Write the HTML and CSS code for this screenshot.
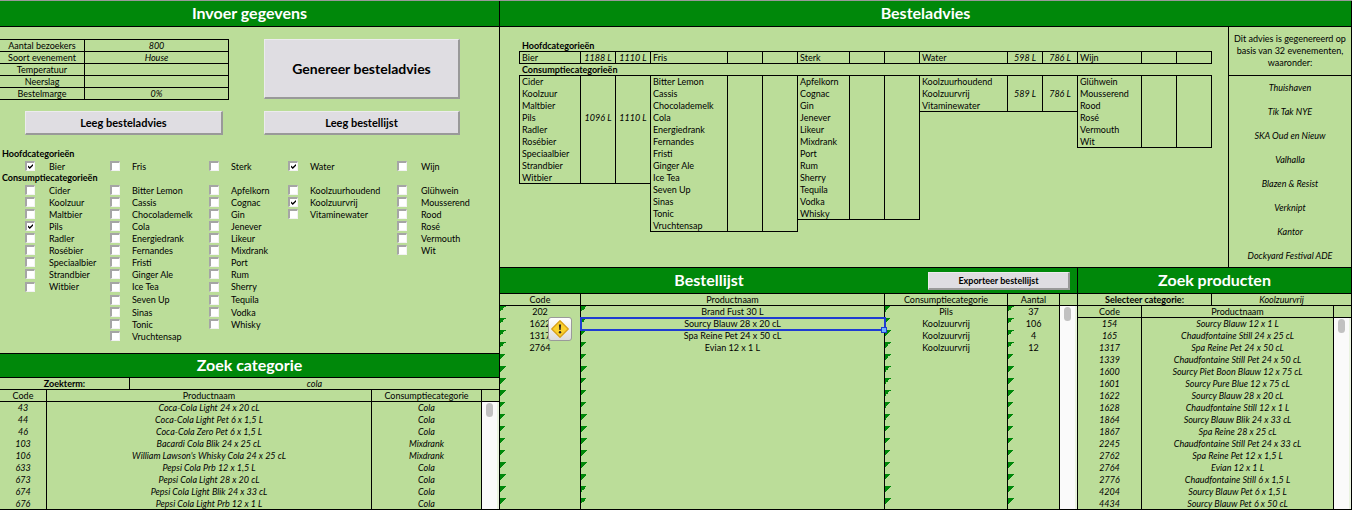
FILE: index.html
```
<!DOCTYPE html>
<html lang="nl">
<head>
<meta charset="utf-8">
<title>Besteladvies</title>
<link rel="stylesheet" href="styles.css">
</head>
<body>
<main class="sheet">
<div class="pane pane-left">
<section class="panel">
<h1 class="bar">Invoer gegevens</h1>
<form class="entry">
<div class="controls">
<table class="grid fields">
<tr><th><label for="f1">Aantal bezoekers</label></th><td><input id="f1" class="cell-input" value="800"></td></tr>
<tr><th><label for="f2">Soort evenement</label></th><td><input id="f2" class="cell-input" value="House"></td></tr>
<tr><th><label for="f3">Temperatuur</label></th><td><input id="f3" class="cell-input"></td></tr>
<tr><th><label for="f4">Neerslag</label></th><td><input id="f4" class="cell-input"></td></tr>
<tr><th><label for="f5">Bestelmarge</label></th><td><input id="f5" class="cell-input" value="0%"></td></tr>
</table>
<button type="button" class="btn btn-large">Genereer besteladvies</button>
<button type="button" class="btn btn-clear">Leeg besteladvies</button>
<button type="button" class="btn">Leeg bestellijst</button>
</div>
<h2 class="subhead">Hoofdcategorieën</h2>
<div class="checks">
<label class="check wide"><input type="checkbox" checked>Bier</label>
<label class="check"><input type="checkbox">Fris</label>
<label class="check"><input type="checkbox">Sterk</label>
<label class="check"><input type="checkbox" checked>Water</label>
<label class="check wide"><input type="checkbox">Wijn</label>
</div>
<h2 class="subhead">Consumptiecategorieën</h2>
<div class="checks">
<div class="check-col">
<label class="check wide"><input type="checkbox">Cider</label>
<label class="check wide"><input type="checkbox">Koolzuur</label>
<label class="check wide"><input type="checkbox">Maltbier</label>
<label class="check wide"><input type="checkbox" checked>Pils</label>
<label class="check wide"><input type="checkbox">Radler</label>
<label class="check wide"><input type="checkbox">Rosébier</label>
<label class="check wide"><input type="checkbox">Speciaalbier</label>
<label class="check wide"><input type="checkbox">Strandbier</label>
<label class="check wide"><input type="checkbox">Witbier</label>
</div>
<div class="check-col">
<label class="check"><input type="checkbox">Bitter Lemon</label>
<label class="check"><input type="checkbox">Cassis</label>
<label class="check"><input type="checkbox">Chocolademelk</label>
<label class="check"><input type="checkbox">Cola</label>
<label class="check"><input type="checkbox">Energiedrank</label>
<label class="check"><input type="checkbox">Fernandes</label>
<label class="check"><input type="checkbox">Fristi</label>
<label class="check"><input type="checkbox">Ginger Ale</label>
<label class="check"><input type="checkbox">Ice Tea</label>
<label class="check"><input type="checkbox">Seven Up</label>
<label class="check"><input type="checkbox">Sinas</label>
<label class="check"><input type="checkbox">Tonic</label>
<label class="check"><input type="checkbox">Vruchtensap</label>
</div>
<div class="check-col">
<label class="check"><input type="checkbox">Apfelkorn</label>
<label class="check"><input type="checkbox">Cognac</label>
<label class="check"><input type="checkbox">Gin</label>
<label class="check"><input type="checkbox">Jenever</label>
<label class="check"><input type="checkbox">Likeur</label>
<label class="check"><input type="checkbox">Mixdrank</label>
<label class="check"><input type="checkbox">Port</label>
<label class="check"><input type="checkbox">Rum</label>
<label class="check"><input type="checkbox">Sherry</label>
<label class="check"><input type="checkbox">Tequila</label>
<label class="check"><input type="checkbox">Vodka</label>
<label class="check"><input type="checkbox">Whisky</label>
</div>
<div class="check-col">
<label class="check"><input type="checkbox">Koolzuurhoudend</label>
<label class="check"><input type="checkbox" checked>Koolzuurvrij</label>
<label class="check"><input type="checkbox">Vitaminewater</label>
</div>
<div class="check-col">
<label class="check wide"><input type="checkbox">Glühwein</label>
<label class="check wide"><input type="checkbox">Mousserend</label>
<label class="check wide"><input type="checkbox">Rood</label>
<label class="check wide"><input type="checkbox">Rosé</label>
<label class="check wide"><input type="checkbox">Vermouth</label>
<label class="check wide"><input type="checkbox">Wit</label>
</div>
</div>
</form>
</section>
<section class="panel">
<h1 class="bar bar-low">Zoek categorie</h1>
<div class="query query-cat"><label for="term">Zoekterm:</label><input id="term" class="cell-input" value="cola"></div>
<table class="grid list italic">
<colgroup><col style="width:9.42%"><col style="width:65.13%"><col style="width:22.05%"><col></colgroup>
<thead><tr><th>Code</th><th>Productnaam</th><th>Consumptiecategorie</th><th></th></tr></thead>
<tbody>
<tr><td>43</td><td>Coca-Cola Light 24 x 20 cL</td><td>Cola</td><td class="scroll" rowspan="9"><div class="thumb"></div></td></tr>
<tr><td>44</td><td>Coca-Cola Light Pet 6 x 1,5 L</td><td>Cola</td></tr>
<tr><td>46</td><td>Coca-Cola Zero Pet 6 x 1,5 L</td><td>Cola</td></tr>
<tr><td>103</td><td>Bacardi Cola Blik 24 x 25 cL</td><td>Mixdrank</td></tr>
<tr><td>106</td><td>William Lawson's Whisky Cola 24 x 25 cL</td><td>Mixdrank</td></tr>
<tr><td>633</td><td>Pepsi Cola Prb 12 x 1,5 L</td><td>Cola</td></tr>
<tr><td>673</td><td>Pepsi Cola Light 28 x 20 cL</td><td>Cola</td></tr>
<tr><td>674</td><td>Pepsi Cola Light Blik 24 x 33 cL</td><td>Cola</td></tr>
<tr><td>676</td><td>Pepsi Cola Light Prb 12 x 1 L</td><td>Cola</td></tr>
</tbody>
</table>
</section>
</div>
<div class="pane pane-right">
<section class="panel">
<h1 class="bar">Besteladvies</h1>
<div class="advice">
<div class="advice-main">
<h2 class="subhead">Hoofdcategorieën</h2>
<div class="groups">
<table class="group g-bier"><tr><th>Bier</th><td>1188 L</td><td>1110 L</td></tr></table>
<table class="group g-fris"><tr><th>Fris</th><td></td><td></td></tr></table>
<table class="group g-sterk"><tr><th>Sterk</th><td></td><td></td></tr></table>
<table class="group g-water"><tr><th>Water</th><td>598 L</td><td>786 L</td></tr></table>
<table class="group g-wijn"><tr><th>Wijn</th><td></td><td></td></tr></table>
</div>
<h2 class="subhead">Consumptiecategorieën</h2>
<div class="groups">
<table class="group g-bier">
<tr><th>Cider</th><td></td><td></td></tr>
<tr><th>Koolzuur</th><td></td><td></td></tr>
<tr><th>Maltbier</th><td></td><td></td></tr>
<tr><th>Pils</th><td>1096 L</td><td>1110 L</td></tr>
<tr><th>Radler</th><td></td><td></td></tr>
<tr><th>Rosébier</th><td></td><td></td></tr>
<tr><th>Speciaalbier</th><td></td><td></td></tr>
<tr><th>Strandbier</th><td></td><td></td></tr>
<tr><th>Witbier</th><td></td><td></td></tr>
</table>
<table class="group g-fris">
<tr><th>Bitter Lemon</th><td></td><td></td></tr>
<tr><th>Cassis</th><td></td><td></td></tr>
<tr><th>Chocolademelk</th><td></td><td></td></tr>
<tr><th>Cola</th><td></td><td></td></tr>
<tr><th>Energiedrank</th><td></td><td></td></tr>
<tr><th>Fernandes</th><td></td><td></td></tr>
<tr><th>Fristi</th><td></td><td></td></tr>
<tr><th>Ginger Ale</th><td></td><td></td></tr>
<tr><th>Ice Tea</th><td></td><td></td></tr>
<tr><th>Seven Up</th><td></td><td></td></tr>
<tr><th>Sinas</th><td></td><td></td></tr>
<tr><th>Tonic</th><td></td><td></td></tr>
<tr><th>Vruchtensap</th><td></td><td></td></tr>
</table>
<table class="group g-sterk">
<tr><th>Apfelkorn</th><td></td><td></td></tr>
<tr><th>Cognac</th><td></td><td></td></tr>
<tr><th>Gin</th><td></td><td></td></tr>
<tr><th>Jenever</th><td></td><td></td></tr>
<tr><th>Likeur</th><td></td><td></td></tr>
<tr><th>Mixdrank</th><td></td><td></td></tr>
<tr><th>Port</th><td></td><td></td></tr>
<tr><th>Rum</th><td></td><td></td></tr>
<tr><th>Sherry</th><td></td><td></td></tr>
<tr><th>Tequila</th><td></td><td></td></tr>
<tr><th>Vodka</th><td></td><td></td></tr>
<tr><th>Whisky</th><td></td><td></td></tr>
</table>
<table class="group g-water">
<tr><th>Koolzuurhoudend</th><td></td><td></td></tr>
<tr><th>Koolzuurvrij</th><td>589 L</td><td>786 L</td></tr>
<tr><th>Vitaminewater</th><td></td><td></td></tr>
</table>
<table class="group g-wijn">
<tr><th>Glühwein</th><td></td><td></td></tr>
<tr><th>Mousserend</th><td></td><td></td></tr>
<tr><th>Rood</th><td></td><td></td></tr>
<tr><th>Rosé</th><td></td><td></td></tr>
<tr><th>Vermouth</th><td></td><td></td></tr>
<tr><th>Wit</th><td></td><td></td></tr>
</table>
</div>
</div>
<aside class="events">
<p class="events-intro">Dit advies is gegenereerd op basis van 32 evenementen, waaronder:</p>
<ul class="events-list">
<li>Thuishaven</li><li>Tik Tak NYE</li><li>SKA Oud en Nieuw</li><li>Valhalla</li><li>Blazen &amp; Resist</li><li>Verknipt</li><li>Kantor</li><li>Dockyard Festival ADE</li>
</ul>
</aside>
</div>
</section>
<div class="lower">
<section class="panel panel-order">
<div class="bar bar-split"><h1 class="bar-title">Bestellijst</h1><button type="button" class="btn btn-small">Exporteer bestellijst</button></div>
<table class="grid list flagged">
<colgroup><col style="width:14.04%"><col style="width:52.69%"><col style="width:21.32%"><col style="width:9.02%"><col></colgroup>
<thead><tr><th>Code</th><th>Productnaam</th><th>Consumptiecategorie</th><th>Aantal</th><th></th></tr></thead>
<tbody>
<tr><td>202</td><td>Brand Fust 30 L</td><td>Pils</td><td>37</td><td class="scroll" rowspan="17"><div class="thumb"></div></td></tr>
<tr><td>1622</td><td class="selected">Sourcy Blauw 28 x 20 cL<button type="button" class="warn" aria-label="Foutcontrole"><svg viewBox="0 0 24 24" aria-hidden="true"><path d="M12 3 21 12 12 21 3 12Z" fill="#fbd12c" stroke="#d8a017" stroke-width="1.4" stroke-linejoin="round"/><path d="M10.8 7.2h2.4l-.5 6h-1.4Z" fill="#2b2622"/><circle cx="12" cy="15.6" r="1.3" fill="#2b2622"/></svg></button><span class="handle"></span></td><td>Koolzuurvrij</td><td>106</td></tr>
<tr><td>1317</td><td>Spa Reine Pet 24 x 50 cL</td><td>Koolzuurvrij</td><td>4</td></tr>
<tr><td>2764</td><td>Evian 12 x 1 L</td><td>Koolzuurvrij</td><td>12</td></tr>
<tr><td></td><td></td><td></td><td></td></tr>
<tr><td></td><td></td><td></td><td></td></tr>
<tr><td></td><td></td><td></td><td></td></tr>
<tr><td></td><td></td><td></td><td></td></tr>
<tr><td></td><td></td><td></td><td></td></tr>
<tr><td></td><td></td><td></td><td></td></tr>
<tr><td></td><td></td><td></td><td></td></tr>
<tr><td></td><td></td><td></td><td></td></tr>
<tr><td></td><td></td><td></td><td></td></tr>
<tr><td></td><td></td><td></td><td></td></tr>
<tr><td></td><td></td><td></td><td></td></tr>
<tr><td></td><td></td><td></td><td></td></tr>
<tr><td></td><td></td><td></td><td></td></tr>
</tbody>
</table>
</section>
<section class="panel">
<h1 class="bar">Zoek producten</h1>
<div class="query query-prod"><label for="cat">Selecteer categorie:</label><select id="cat" class="cell-input"><option>Koolzuurvrij</option></select></div>
<table class="grid list italic">
<colgroup><col style="width:23.45%"><col style="width:70.33%"><col></colgroup>
<thead><tr><th>Code</th><th>Productnaam</th><th></th></tr></thead>
<tbody>
<tr><td>154</td><td>Sourcy Blauw 12 x 1 L</td><td class="scroll" rowspan="16"><div class="thumb"></div></td></tr>
<tr><td>165</td><td>Chaudfontaine Still 24 x 25 cL</td></tr>
<tr><td>1317</td><td>Spa Reine Pet 24 x 50 cL</td></tr>
<tr><td>1339</td><td>Chaudfontaine Still Pet 24 x 50 cL</td></tr>
<tr><td>1600</td><td>Sourcy Piet Boon Blauw 12 x 75 cL</td></tr>
<tr><td>1601</td><td>Sourcy Pure Blue 12 x 75 cL</td></tr>
<tr><td>1622</td><td>Sourcy Blauw 28 x 20 cL</td></tr>
<tr><td>1628</td><td>Chaudfontaine Still 12 x 1 L</td></tr>
<tr><td>1864</td><td>Sourcy Blauw Blik 24 x 33 cL</td></tr>
<tr><td>1867</td><td>Spa Reine 28 x 25 cL</td></tr>
<tr><td>2245</td><td>Chaudfontaine Still Pet 24 x 33 cL</td></tr>
<tr><td>2762</td><td>Spa Reine Pet 12 x 1,5 L</td></tr>
<tr><td>2764</td><td>Evian 12 x 1 L</td></tr>
<tr><td>2776</td><td>Chaudfontaine Still 6 x 1,5 L</td></tr>
<tr><td>4204</td><td>Sourcy Blauw Pet 6 x 1,5 L</td></tr>
<tr><td>4434</td><td>Sourcy Blauw Pet 6 x 50 cL</td></tr>
</tbody>
</table>
</section>
</div>
</div>
</main>
</body>
</html>
```
FILE: styles.css
```
:root {
  --leaf: #bbdd99;
  --green: #00880a;
  --line: #000;
  --face: #dfdde2;
}
* { box-sizing: border-box; }
body {
  margin: 0;
  background: #fff;
  color: #000;
  font: 9px/11px Lato, "Open Sans", sans-serif;
}
h1, h2, p, ul { margin: 0; padding: 0; }
input, select, button { font: inherit; color: inherit; margin: 0; }
table { border-spacing: 0; table-layout: fixed; }
th, td { padding: 0; height: 12px; white-space: nowrap; vertical-align: top; }
th { font-weight: 400; }

.sheet {
  display: grid;
  grid-template-columns: minmax(0, 500fr) minmax(0, 852fr);
  margin-right: 2px;
  border-top: 1px solid #999;
  background: var(--leaf);
}
.pane { display: flex; flex-direction: column; border-right: 1px solid var(--line); }
.bar {
  height: 26px;
  background: var(--green);
  border-bottom: 1px solid var(--line);
  color: #fff;
  font-size: 16px;
  line-height: 24px;
  font-weight: 700;
  text-align: center;
}
.bar-low { height: 24px; line-height: 22px; }
.subhead { font-size: 9px; line-height: 12px; font-weight: 700; }

.entry { height: 327px; padding-top: 12px; border-bottom: 1px solid var(--line); }
.controls {
  display: grid;
  grid-template-columns: minmax(0, 264fr) minmax(0, 196fr) minmax(0, 39fr);
  grid-template-rows: 61px 24px;
  row-gap: 11px;
  margin-bottom: 13px;
}
.controls > :nth-child(odd) { grid-column: 1; }
.controls > :nth-child(even) { grid-column: 2; }
.entry .subhead { padding-left: 2px; }

.grid td, .grid th { border-right: 1px solid var(--line); text-align: center; }
.fields { width: 229px; border-top: 1px solid var(--line); }
.fields th { width: 85px; }
.fields th, .fields td { border-bottom: 1px solid var(--line); }
.cell-input {
  display: block;
  width: 100%;
  height: 11px;
  padding: 0;
  border: 0;
  border-radius: 0;
  background: none;
  appearance: none;
  font-style: italic;
  line-height: 11px;
  text-align: center;
  text-align-last: center;
}
.btn {
  padding: 0;
  background: var(--face);
  border: 1px solid;
  border-color: #ecebee #999 #999 #ecebee;
  border-width: 1px 2px 2px 1px;
  font-size: 11px;
  font-weight: 700;
}
.btn-large { font-size: 14px; height: 60px; }
.btn-clear { margin: 0 41px 0 25px; }
.btn-small { height: 18px; font-size: 9px; line-height: 11px; }

.checks {
  display: grid;
  grid-template-columns: minmax(0, 85fr) minmax(0, 99fr) minmax(0, 79fr) minmax(0, 109fr) minmax(0, 102fr);
  padding-left: 25px;
}
.check { display: grid; grid-template-columns: 22px 1fr; align-items: center; height: 12px; white-space: nowrap; }
.check.wide { grid-template-columns: 24px 1fr; }
.check-col .check:nth-child(9), .check-col .check:nth-child(10) { height: 13px; }
.check input {
  appearance: none;
  width: 10px;
  height: 10px;
  background: #fff;
  border: 1px solid;
  border-width: 2px 1px 1px 2px;
  border-color: #a5a5a5 #f3f3f3 #f3f3f3 #a5a5a5;
}
.check input:checked::before {
  content: "";
  display: block;
  width: 5px;
  height: 5px;
  margin: 1px;
  background: #000;
  clip-path: polygon(0 30%, 35% 60%, 100% 0, 100% 35%, 35% 100%, 0 65%);
}

.query { display: grid; height: 12px; border-bottom: 1px solid var(--line); text-align: center; }
.query label { border-right: 1px solid var(--line); font-weight: 700; }
.query-cat { grid-template-columns: minmax(0, 130fr) minmax(0, 369fr); }
.query-prod { grid-template-columns: minmax(0, 134fr) minmax(0, 139fr); }
.list { width: 100%; border-bottom: 1px solid var(--line); }
.list thead th { border-bottom: 1px solid var(--line); }
.list th:last-child, .list .scroll { border-right: 0; }
.list tbody tr:last-child td { height: 11px; }
.italic tbody td { font-style: italic; }
.grid .scroll { background: #fafafa; box-shadow: inset -2px 0 #e9f3df; }
.thumb { width: 7px; height: 14px; margin: 1px 0 0 4px; border-radius: 4px; background: #c1c1c1; }

.advice { display: grid; grid-template-columns: minmax(0, 728fr) minmax(0, 123fr); height: 241px; border-bottom: 1px solid var(--line); }
.advice-main { padding: 13px 16px 0 19px; }
.advice-main .subhead { padding-left: 3px; line-height: 11px; }
.groups { display: grid; align-items: start; grid-template-columns: minmax(0, 131fr) minmax(0, 147fr) minmax(0, 122fr) minmax(0, 158fr) minmax(0, 135fr); }
.group { width: calc(100% + 1px); border: 1px solid var(--line); border-bottom: 0; }
.group th { text-align: left; padding-left: 2px; }
.group td { width: 35px; border-left: 1px solid var(--line); font-style: italic; text-align: center; }
.group tr:last-child > * { border-bottom: 1px solid var(--line); }
.group:last-child { width: 100%; }

.events { border-left: 1px solid var(--line); text-align: center; }
.events-intro { height: 49px; padding: 6px 4px 0; border-bottom: 1px solid var(--line); line-height: 12px; }
.events-list { list-style: none; font-style: italic; line-height: 24px; }

.lower { display: grid; grid-template-columns: minmax(0, 578fr) minmax(0, 273fr); }
.panel-order { border-right: 1px solid var(--line); }
.bar-split { display: grid; grid-template-columns: minmax(0, 418fr) minmax(0, 142fr); column-gap: 10px; padding-right: 7px; }
.bar-title { font-size: 16px; line-height: 24px; }
.bar-split .btn { align-self: center; color: #000; }
.flagged tbody td:not(.scroll) { background: linear-gradient(135deg, var(--green) 50%, transparent 50%) 0 0 / 6px 6px no-repeat; }
.selected { position: relative; outline: 2px solid #1f3cd2; outline-offset: -1px; }
.warn {
  position: absolute;
  left: -33px;
  top: -1px;
  width: 24px;
  height: 24px;
  padding: 0;
  border: 1px solid #9a9a9a;
  border-radius: 3px;
  background: linear-gradient(#fff, #dcdcdc);
}
.warn svg { display: block; width: 100%; height: 100%; }
.handle { position: absolute; right: -3px; bottom: -3px; width: 6px; height: 6px; border: 1px solid #1f3cd2; background: #6fb4ff; }
```
